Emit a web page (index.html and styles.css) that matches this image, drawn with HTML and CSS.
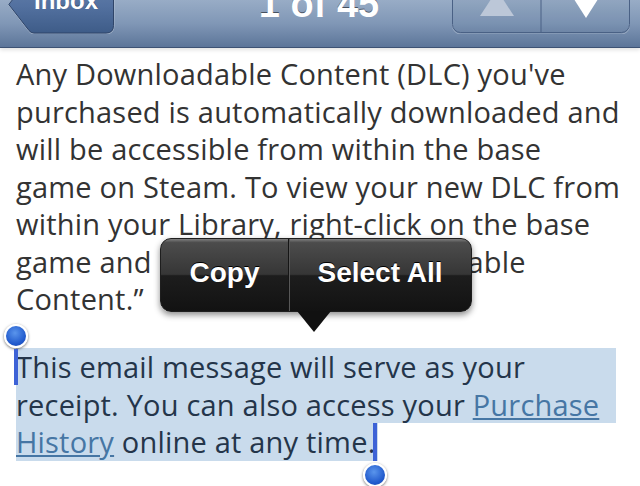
FILE: index.html
```html
<!DOCTYPE html>
<html>
<head>
<meta charset="utf-8">
<link rel="stylesheet" href="styles.css">
</head>
<body>
<div class="screen">
  <header class="navbar">
    <div class="back-btn">
      <svg class="btn-bg" width="108" height="62" viewBox="0 0 108 62">
        <defs>
          <linearGradient id="bb" x1="0" y1="0" x2="0" y2="1">
            <stop offset="0" stop-color="#6a86ae"/>
            <stop offset="0.55" stop-color="#5371a0"/>
            <stop offset="1" stop-color="#3e5c88"/>
          </linearGradient>
        </defs>
        <path d="M26,1 L0.8,33 L21,59.5 Q23,62 26,62 L98,62 Q106,62 106,54 L106,1 Z" fill="none" stroke="rgba(255,255,255,0.3)" stroke-width="1"/>
        <path d="M26,0 L0.8,32.5 L21,58.5 Q23,61 26,61 L98,61 Q105.5,61 105.5,53.5 L105.5,0 Z" fill="url(#bb)" stroke="#2f4569" stroke-width="1"/>
      </svg>
      <span class="back-label">Inbox</span>
    </div>
    <div class="title">1 of 45</div>
    <div class="segmented">
      <svg class="seg-bg" width="178" height="62" viewBox="0 0 178 62">
        <rect x="0.5" y="-9" width="177" height="71" rx="8" fill="none" stroke="rgba(255,255,255,0.28)"/>
        <rect x="0.5" y="-10" width="177" height="70.5" rx="8" fill="rgba(40,66,110,0.06)" stroke="#4a6185"/>
        <line x1="89" y1="0" x2="89" y2="60" stroke="#4a6185"/>
        <polygon points="45,18 62,44 28,44" fill="#bcc7d8"/>
        <polygon points="120,24 148,24 134,46" fill="#ffffff"/>
      </svg>
    </div>
  </header>
  <main class="content">
    <p class="para first">Any Downloadable Content (DLC) you've<br>purchased is automatically downloaded and<br>will be accessible from within the base<br>game on Steam. To view your new DLC from<br>within your Library, right-click on the base<br>game and select &ldquo;View Downloadable<br>Content.&rdquo;</p>
    <div class="para selected">
      <div class="sel-line full">This email message will serve as your</div>
      <div class="sel-line full">receipt. You can also access your <a href="#">Purchase</a></div>
      <div class="sel-line last"><a href="#">History</a> online at any time.</div>
    </div>
  </main>
  <div class="popup">
    <div class="popup-item copy">Copy</div>
    <div class="popup-item selall">Select All</div>
    <div class="popup-arrow"></div>
  </div>
  <div class="handle handle-start"><div class="knob"></div><div class="bar"></div></div>
  <div class="handle handle-end"><div class="bar"></div><div class="knob"></div></div>
</div>
</body>
</html>
```
FILE: styles.css
```css
html, body { margin: 0; padding: 0; }
body { background: #fff; width: 640px; height: 486px; overflow: hidden; }
.screen { position: relative; width: 640px; height: 486px; overflow: hidden; }

.navbar {
  position: relative;
  height: 48px;
  box-sizing: border-box;
  display: grid;
  grid-template-columns: 1fr auto 1fr;
  grid-template-rows: 33px;
  align-items: unsafe end;
  padding: 0 10px 14px 8px;
  overflow: hidden;
  background: linear-gradient(#98acc6, #8097b6 50%, #5c7599);
  border-bottom: 1px solid #3d5274;
  box-shadow: 0 2px 4px rgba(0,0,0,0.12);
  z-index: 2;
}
.back-btn {
  position: relative;
  justify-self: start;
  align-self: unsafe end;
  width: 108px; height: 62px;
  margin-bottom: -1px;
  display: flex;
  align-items: flex-end;
  padding: 0 0 21px 26px;
  box-sizing: border-box;
}
.btn-bg { position: absolute; left: 0; top: 0; }
.back-label {
  position: relative;
  font: bold 24px/24px "Liberation Sans", Arial, sans-serif;
  color: #fff;
  text-shadow: 0 -1px 0 rgba(0,0,0,0.45);
}
.title {
  align-self: unsafe end;
  margin-bottom: 10px;
  font: bold 38px/38px "Liberation Sans", Arial, sans-serif;
  color: #fff;
  text-shadow: 0 -1px 0 rgba(0,0,0,0.5);
}
.segmented {
  position: relative;
  justify-self: end;
  align-self: unsafe end;
  width: 178px; height: 62px;
  margin-bottom: -1px;
}
.seg-bg { position: absolute; left: 0; top: 0; }

.content {
  padding: 7px 24px 0 16px;
  font-family: "Open Sans", "DejaVu Sans", sans-serif;
  font-size: 29px;
  letter-spacing: 0.2px;
  line-height: 37.5px;
  color: #333;
}
.para { margin: 0; white-space: nowrap; }
.selected { margin-top: 30.5px; color: #24354a; }
.sel-line { height: 37.5px; background: #c9dbec; }
.sel-line.last { width: fit-content; padding-right: 3px; }
.sel-line a { color: #4676a4; text-decoration: underline; }

.popup {
  position: absolute; left: 160px; top: 238px;
  width: 312px; height: 74px;
  display: flex;
  border-radius: 11px;
  border: 1px solid #1e1e1e;
  box-sizing: border-box;
  background: linear-gradient(#7e7e7e 0%, #4c4c4c 5%, #363636 49%, #1d1d1d 51%, #121212 100%);
  box-shadow: 0 3px 6px rgba(0,0,0,0.45);
  font: bold 28px "Liberation Sans", Arial, sans-serif;
  color: #fff;
  z-index: 3;
}
.popup-item {
  display: flex; align-items: center; justify-content: center;
  padding-bottom: 5px;
  text-shadow: 0 -1px 0 #000;
}
.copy { width: 127px; border-right: 1px solid #151515; box-shadow: 1px 0 0 #575757; }
.selall { flex: 1; }
.popup-arrow {
  position: absolute; left: 136px; top: 72px;
  width: 0; height: 0;
  border-left: 17px solid transparent; border-right: 17px solid transparent;
  border-top: 21px solid #111;
}

.handle { position: absolute; display: flex; flex-direction: column; align-items: center; z-index: 4; }
.handle-start { left: 4px; top: 324px; }
.handle-end { left: 363px; top: 423px; }
.bar { width: 4px; background: #3d62d6; }
.handle-start .bar { height: 36px; margin-top: 1px; }
.handle-end .bar { height: 38px; margin-bottom: 2px; }
.knob {
  width: 24px; height: 24px; border-radius: 50%;
  box-sizing: border-box;
  background: radial-gradient(circle at 45% 35%, #5a95ec, #2059cc 65%, #1a49b0);
  border: 2px solid #fff;
  box-shadow: 0 1px 3px rgba(0,0,0,0.55);
}
```
